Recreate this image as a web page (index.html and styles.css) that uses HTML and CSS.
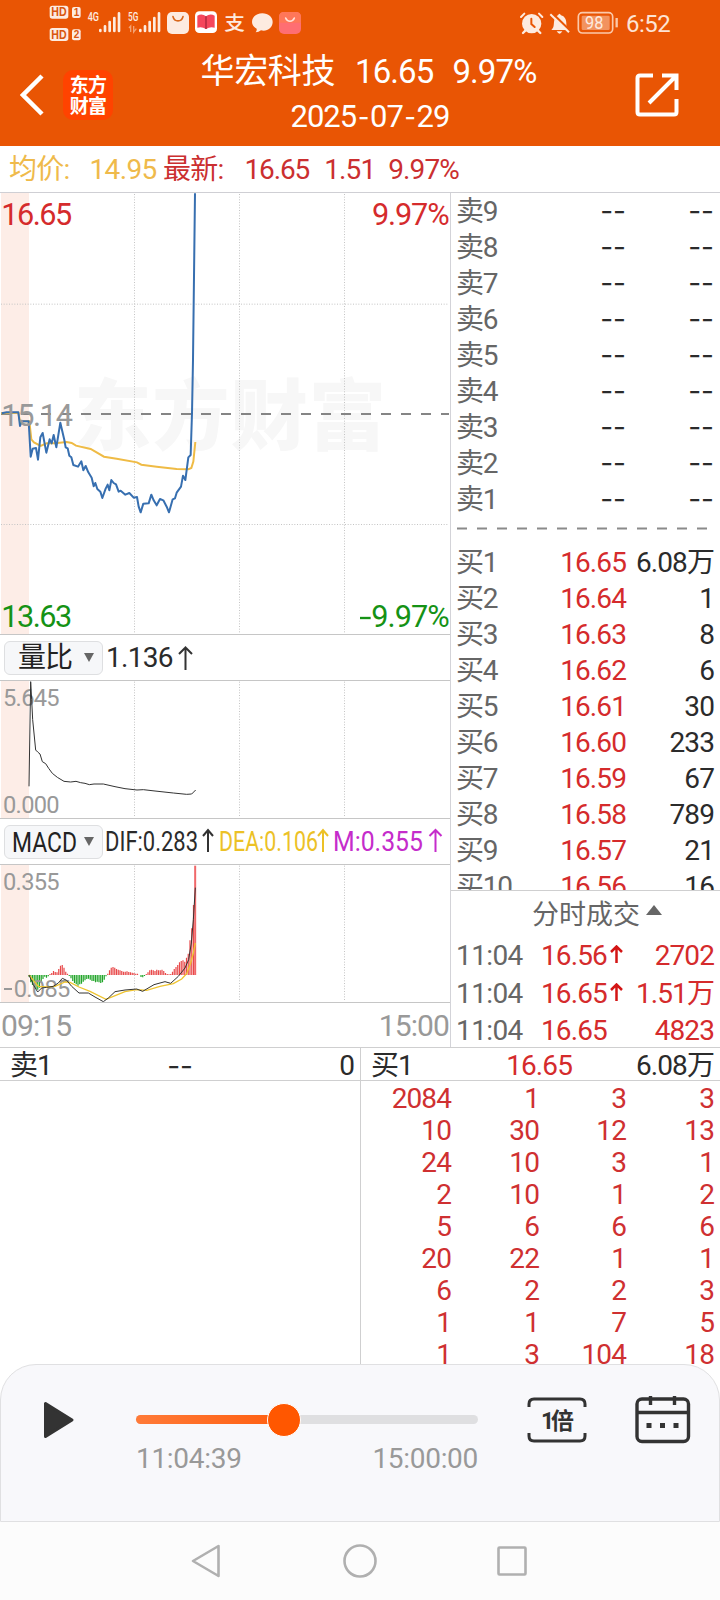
FILE: index.html
```html
<!DOCTYPE html>
<html lang="zh-CN">
<head>
    <meta charset="UTF-8">
    <title>华宏科技</title>
    <link rel="stylesheet" href="styles.css">
</head>
<body>
    <header>
        <div class="status">
            <svg class="status-left" viewBox="0 0 930 135" width="310" height="45">
                <g fill="#fdebe0">
                    <rect x="149" y="17" width="56" height="39" rx="8"/>
                    <rect x="216" y="21" width="26" height="33" rx="6"/>
                    <rect x="149" y="84" width="56" height="39" rx="8"/>
                    <rect x="216" y="88" width="26" height="33" rx="6"/>
                </g>
                <g class="sim">
                    <text x="154" y="49" textLength="46" lengthAdjust="spacingAndGlyphs">HD</text>
                    <text x="221" y="48">1</text>
                    <text x="154" y="116" textLength="46" lengthAdjust="spacingAndGlyphs">HD</text>
                    <text x="221" y="115">2</text>
                </g>
                <g class="net">
                    <text x="263" y="63" textLength="34" lengthAdjust="spacingAndGlyphs">4G</text>
                    <text x="384" y="63" textLength="31" lengthAdjust="spacingAndGlyphs">5G</text>
                </g>
                <g stroke="#fdebe0" stroke-width="8" stroke-linecap="round">
                    <path d="M301 90v3M315 79v14M329 66v27M343 54v39M357 40v53"/>
                    <path d="M421 90v3M435 79v14M449 66v27M463 54v39M477 40v53"/>
                </g>
                <path d="M387 84l5-6v18M401 78v18l8-10" fill="none" stroke="#f3a273" stroke-width="4"/>
                <rect x="501" y="36" width="66" height="66" rx="15" fill="#fdebe0"/>
                <path d="M519 50c4 17 26 17 30 0" fill="none" stroke="#d9671c" stroke-width="5" stroke-linecap="round"/>
                <rect x="585" y="34" width="66" height="65" rx="13" fill="#fff"/>
                <path d="M592 47q14-8 26 2q12-10 26-2v36q-14-4-26 4q-12-8-26-4z" fill="#f5465c"/>
                <path d="M618 49v38" stroke="#b92c42" stroke-width="5"/>
                <text class="pay" x="673" y="90" textLength="62" lengthAdjust="spacingAndGlyphs">支</text>
                <path d="M787 40c18 0 31 11 31 26s-13 26-27 26c-3 0-6 0-8-1q-7 6-16 6q4-5 3-11c-9-5-14-12-14-20c0-15 13-26 31-26z" fill="#fdebe0"/>
                <rect x="837" y="36" width="66" height="66" rx="15" fill="#ff6e72"/>
                <path d="M837 51q0-15 15-15h36q15 0 15 15v17h-66z" fill="#ff7759"/>
                <path d="M857 54c5 13 21 13 26 0" fill="none" stroke="#ffe3d8" stroke-width="5" stroke-linecap="round"/>
            </svg>
            <svg class="status-right" viewBox="465 0 495 135" width="165" height="45">
                <circle cx="515" cy="71" r="29" fill="#fdebe0"/>
                <path d="M483 51l10-10M547 51l-10-10" stroke="#fdebe0" stroke-width="6" stroke-linecap="round"/>
                <path d="M496 92l-7 7M534 92l7 7" stroke="#fdebe0" stroke-width="7" stroke-linecap="round"/>
                <path d="M514 56v16l10 9" fill="none" stroke="#e95504" stroke-width="6" stroke-linecap="round"/>
                <path d="M574 90c8-8 7-14 8-24c1-12 6-18 12-20q4-9 9 0c11 3 16 12 16 24c0 9 1 13 6 20zM590 94h17q-8 14-17 0z" fill="#fdebe0"/>
                <path d="M576 39l54 53" stroke="#e95504" stroke-width="7"/>
                <path d="M571 43l56 54" stroke="#fdebe0" stroke-width="6"/>
                <rect x="655" y="38" width="103" height="61" rx="12" fill="none" stroke="#fbc9aa" stroke-width="5"/>
                <rect x="665" y="47" width="84" height="43" rx="4" fill="#f2935f"/>
                <path d="M770 54v28" stroke="#fbc9aa" stroke-width="7"/>
                <text class="battery" x="675" y="86" textLength="55" lengthAdjust="spacingAndGlyphs">98</text>
                <text class="clock" x="798" y="96" textLength="134">6:52</text>
            </svg>
        </div>
        <div class="title-bar">
            <svg class="back" viewBox="0 0 24 42" width="24" height="42"><path d="M22 2L3 21l19 19" fill="none" stroke="#fff" stroke-width="4.500"/></svg>
            <div class="logo">东方<br>财富</div>
            <div class="title">
                <h1><span class="title-name">华宏科技</span><span class="title-price">16.65</span><span class="title-rate">9.97%</span></h1>
                <p>2025<b>-</b>07<b>-</b>29</p>
            </div>
            <svg class="share" viewBox="0 0 44 44" width="44" height="44"><path d="M18 2.500H5Q2.500 2.500 2.500 5V39Q2.500 41.500 5 41.500H39Q41.500 41.500 41.500 39V26M27 2.500H41.500V17M41 3L14 30" fill="none" stroke="#fff" stroke-width="4"/></svg>
        </div>
    </header>

    <div class="quote">
        <span class="avg"><i>均价:</i><span class="avg-num">14.95</span></span>
        <span class="latest"><i>最新:</i><span class="last-num">16.65</span><span class="chg-num">1.51</span><span class="rate-num">9.97%</span></span>
    </div>

    <main>
        <section class="charts">
            <svg class="chart" viewBox="0 -501 1350 1323" width="450" height="441">
                <rect class="auction" x="3" y="-501" width="84" height="1323"/>
                <text class="watermark" x="222" y="251" textLength="936">东方财富</text>
                <path class="grid" d="M403.500 -498V820M718.500 -498V820M1033.500 -498V820M3 -167.500H1345M3 493.500H1345"/>
                <path d="M3 162H1347" stroke="#858585" stroke-width="6" stroke-dasharray="30 30"/>
                <polyline points="3,160 55,158 60,184 88,184 94,238 102,247 122,258 140,250 165,250 200,246 215,249 228,257 272,267 312,290 350,296 411,307 424,314 470,320 530,327 565,328 574,324 580,305 586,246" fill="none" stroke="#efbb45" stroke-width="6"/>
                <polyline points="5,160 20,157 55,157 60,198 65,184 86,184 92,290 98,266 108,264 114,299 121,232 128,219 139,278 149,238 155,250 161,225 169,262 181,188 193,240 197,262 203,265 208,287 214,292 220,315 234,320 244,304 250,331 257,318 265,337 275,353 281,379 286,369 292,387 301,395 307,414 317,386 323,374 328,391 334,360 341,369 348,373 356,395 362,392 376,404 388,399 401,413 411,411 416,440 422,457 430,431 446,430 454,404 461,421 470,436 480,417 490,421 500,440 507,457 518,418 525,415 530,398 543,380 549,347 556,360 565,292 572,285 576,160 579,0 585,-500" fill="none" stroke="#376fb0" stroke-width="6" stroke-linejoin="round"/>
                <g class="axis-big">
                    <text class="up" x="4" y="-405" textLength="213">16.65</text>
                    <text class="up" x="1116" y="-405" textLength="233">9.97%</text>
                    <text class="flat" x="4" y="198" textLength="215">15.14</text>
                    <text class="down" x="4" y="801" textLength="213">13.63</text>
                    <text class="down" x="1114" y="801" textLength="235">9.97%</text>
                    <path d="M1080 774h32" stroke="#159215" stroke-width="7"/>
                </g>
            </svg>
            <div class="indicator">
                <div class="picker"><span>量比</span><i></i></div>
                <span class="value">1.136</span>
                <svg class="rise" viewBox="0 0 15 24" width="15" height="24"><path d="M7.500 24V1M1 8l6.500-6.500L14 8"/></svg>
            </div>
            <svg class="chart" viewBox="0 184 1350 411" width="450" height="137">
                <rect class="auction" x="3" y="184" width="84" height="411"/>
                <path class="grid" d="M403.500 186V594M718.500 186V594M1033.500 186V594"/>
                <g class="axis-small">
                    <text x="9" y="259" textLength="170">5.645</text>
                    <text x="9" y="579" textLength="170">0.000</text>
                </g>
                <polyline points="87,500 92,186 95,240 98,300 107,391 113,397 120,403 127,426 137,432 146,446 157,461 172,473 192,485 212,487 228,485 242,489 255,491 268,495 282,493 310,493 345,501 375,507 411,511 430,510 465,514 520,520 560,524 575,523 587,511" fill="none" stroke="#333" stroke-width="3"/>
            </svg>
            <div class="indicator">
                <div class="picker macd">
                    <svg viewBox="0 0 64 32" width="64" height="32"><text x="-1" y="26" textLength="65" lengthAdjust="spacingAndGlyphs">MACD</text></svg>
                    <i></i>
                </div>
                <!-- condensed so that all three values fit on the row -->
                <svg class="macd-values" viewBox="104 0 342 45" width="342" height="45">
                    <g fill="#2b2b2b" stroke="#333">
                        <text x="105" y="32" textLength="93" lengthAdjust="spacingAndGlyphs">DIF:0.283</text>
                        <path d="M208 33V11M203 17l5-6l5 6"/>
                    </g>
                    <g fill="#ecc126" stroke="#ecc126">
                        <text x="219" y="32" textLength="99" lengthAdjust="spacingAndGlyphs">DEA:0.106</text>
                        <path d="M323 33V11M318 17l5-6l5 6"/>
                    </g>
                    <g fill="#c52ccb" stroke="#c52ccb">
                        <text x="333" y="32" textLength="90" lengthAdjust="spacingAndGlyphs">M:0.355</text>
                        <path d="M435.500 33V11M429.500 17l6-6l6 6"/>
                    </g>
                </svg>
            </div>
            <svg class="chart" viewBox="0 136 1350 411" width="450" height="137">
                <rect class="auction" x="3" y="136" width="84" height="411"/>
                <path class="grid" d="M403.500 138V546M718.500 138V546M1033.500 138V546"/>
                <path id="barsUp" stroke="#e8494a" stroke-width="3.600"/>
                <path id="barsDown" stroke="#22a52a" stroke-width="3.600"/>
                <path d="M585.500 138V466" stroke="#f0686a" stroke-width="6"/>
                <g class="axis-small">
                    <text x="9" y="211" textLength="170">0.355</text>
                    <text x="41" y="531" textLength="170">0.085</text>
                    <path d="M12 508h24" stroke="#999" stroke-width="6"/>
                </g>
                <polyline points="87,466 115,500 140,502 165,500 195,487 210,488 237,502 270,515 318,539 340,530 375,516 410,510 440,512 480,500 520,492 545,478 560,462 572,430 580,400 586,370" fill="none" stroke="#efc42f" stroke-width="4"/>
                <polyline points="87,466 100,495 113,517 125,505 140,503 160,500 175,490 187,476 200,482 215,500 237,520 265,520 285,532 310,546 325,535 345,516 375,511 410,508 428,515 450,502 462,495 480,490 495,486 512,491 535,470 555,445 566,420 574,370 580,300 586,204" fill="none" stroke="#333" stroke-width="3"/>
            </svg>
            <div class="time-axis"><span>09:15</span><span>15:00</span></div>
        </section>

        <section class="book">
            <div class="levels">
                <div class="level"><span>卖9</span><b>--</b><b>--</b></div>
                <div class="level"><span>卖8</span><b>--</b><b>--</b></div>
                <div class="level"><span>卖7</span><b>--</b><b>--</b></div>
                <div class="level"><span>卖6</span><b>--</b><b>--</b></div>
                <div class="level"><span>卖5</span><b>--</b><b>--</b></div>
                <div class="level"><span>卖4</span><b>--</b><b>--</b></div>
                <div class="level"><span>卖3</span><b>--</b><b>--</b></div>
                <div class="level"><span>卖2</span><b>--</b><b>--</b></div>
                <div class="level"><span>卖1</span><b>--</b><b>--</b></div>
                <svg class="split" viewBox="0 0 252 27" width="252" height="27"><path d="M0 11.500H252" stroke="#8a8a8a" stroke-width="2" stroke-dasharray="10 10"/></svg>
                <div class="level"><span>买1</span><em>16.65</em><strong>6.08万</strong></div>
                <div class="level"><span>买2</span><em>16.64</em><strong>1</strong></div>
                <div class="level"><span>买3</span><em>16.63</em><strong>8</strong></div>
                <div class="level"><span>买4</span><em>16.62</em><strong>6</strong></div>
                <div class="level"><span>买5</span><em>16.61</em><strong>30</strong></div>
                <div class="level"><span>买6</span><em>16.60</em><strong>233</strong></div>
                <div class="level"><span>买7</span><em>16.59</em><strong>67</strong></div>
                <div class="level"><span>买8</span><em>16.58</em><strong>789</strong></div>
                <div class="level"><span>买9</span><em>16.57</em><strong>21</strong></div>
                <div class="level"><span>买10</span><em>16.56</em><strong>16</strong></div>
            </div>
            <div class="trades">
                <h2>分时成交<i></i></h2>
                <div class="trade"><span>11:04</span><em>16.56<svg viewBox="0 0 13 18" width="13" height="18"><path d="M6.500 18V2M1 7l5.500-5.500L12 7"/></svg></em><strong>2702</strong></div>
                <div class="trade"><span>11:04</span><em>16.65<svg viewBox="0 0 13 18" width="13" height="18"><path d="M6.500 18V2M1 7l5.500-5.500L12 7"/></svg></em><strong>1.51万</strong></div>
                <div class="trade"><span>11:04</span><em>16.65</em><strong>4823</strong></div>
            </div>
        </section>
    </main>

    <div class="queues">
        <section class="queue">
            <div class="queue-head"><span>卖1</span><b>--</b><strong>0</strong></div>
        </section>
        <section class="queue buy">
            <div class="queue-head"><span>买1</span><em>16.65</em><strong>6.08万</strong></div>
            <div class="orders">
                <span>2084</span><span>1</span><span>3</span><span>3</span>
                <span>10</span><span>30</span><span>12</span><span>13</span>
                <span>24</span><span>10</span><span>3</span><span>1</span>
                <span>2</span><span>10</span><span>1</span><span>2</span>
                <span>5</span><span>6</span><span>6</span><span>6</span>
                <span>20</span><span>22</span><span>1</span><span>1</span>
                <span>6</span><span>2</span><span>2</span><span>3</span>
                <span>1</span><span>1</span><span>7</span><span>5</span>
                <span>1</span><span>3</span><span>104</span><span>18</span>
            </div>
        </section>
    </div>

    <div class="player">
        <svg class="play" viewBox="0 0 31 38" width="31" height="38"><path d="M2.500 2.500V35.500L29 19z" fill="#333" stroke="#333" stroke-width="3" stroke-linejoin="round"/></svg>
        <div class="progress">
            <div class="track"><div class="fill"></div><div class="thumb"></div></div>
            <div class="times"><span>11:04:39</span><span>15:00:00</span></div>
        </div>
        <svg class="speed" viewBox="0 0 60 48" width="60" height="48">
            <path d="M2 11V8Q2 3 7 3H53Q58 3 58 8V11M2 37V40Q2 45 7 45H53Q58 45 58 40V37" fill="none" stroke="#333" stroke-width="3"/>
            <text x="14" y="33" textLength="33">1倍</text>
        </svg>
        <svg class="calendar" viewBox="0 0 56 50" width="56" height="50">
            <rect x="2" y="5" width="51.500" height="42.500" rx="5" fill="none" stroke="#333" stroke-width="3.400"/>
            <path d="M2 18.500H53M15.500 2V11M39.500 2V11" stroke="#333" stroke-width="3.400"/>
            <path d="M11.500 31.500h5M25 31.500h5M38.500 31.500h5" stroke="#333" stroke-width="5"/>
        </svg>
    </div>

    <nav>
        <svg viewBox="0 0 30 34" width="30" height="34"><path d="M27.500 2V32L2 17z" fill="none" stroke="#b0b0b0" stroke-width="2.600" stroke-linejoin="round"/></svg>
        <svg viewBox="0 0 34 34" width="34" height="34"><circle cx="17" cy="17" r="15.500" fill="none" stroke="#b0b0b0" stroke-width="2.600"/></svg>
        <svg viewBox="0 0 30 30" width="30" height="30"><rect x="1.500" y="1.500" width="27" height="27" rx="1" fill="none" stroke="#b0b0b0" stroke-width="2.600"/></svg>
    </nav>

    <script>
        // MACD histogram, one bar per minute from 09:30
        const bars = [-5, -22, -30, -36, -42, -44, -38, -24, -12, -5, -8, -4, 3, 6, 12, 9, 8, 18, 28, 30, 22, 10, 4,
            -3, -10, -18, -24, -28, -32, -28, -26, -20, -16, -12, -11, -14, -18, -18, -22, -20, -22, -24, -22, -14, -4,
            4, 14, 22, 24, 22, 18, 16, 14, 12, 10, 10, 11, 9, 8, 7, 6, 4, 4, 0, -6, -7, -3, 3, 8, 14, 16, 14, 12, 16,
            14, 14, 16, 12, 6, 3, 2, 3, 10, 18, 24, 30, 38, 42, 44, 40, 52, 64, 104, 140, 210];
        let up = "";
        let down = "";

        bars.forEach((value, i) => {
            const line = `M${87 + i * 5.25} 466v${-value}`;
            if (value > 0) {
                up += line;
            } else {
                down += line;
            }
        });
        document.getElementById("barsUp").setAttribute("d", up);
        document.getElementById("barsDown").setAttribute("d", down);
    </script>
</body>
</html>
```
FILE: styles.css
```css
* {
    box-sizing: border-box;
}

body {
    width: 720px;
    height: 1600px;
    margin: 0;
    overflow: hidden;
    background-color: #fff;
    font-family: Roboto, "Noto Sans CJK SC", sans-serif;
    font-size: 28px;
    letter-spacing: -0.9px;
    color: #2b2b2b;
}

svg {
    display: block;
    flex: none;
}

i, em {
    font-style: normal;
}

b, strong {
    font-weight: 400;
}

header {
    height: 146px;
    background-color: #e95504;
    color: #fff;
}

.status {
    display: flex;
    height: 45px;
}

.status-right {
    margin-left: 205px;
}

.status text {
    letter-spacing: 0;
}

.sim text {
    font-size: 36px;
    font-weight: 700;
    fill: #d9560f;
    font-family: "Liberation Sans", sans-serif;
}

.sim text:nth-child(even) {
    font-size: 30px;
}

.net text {
    font-size: 36px;
    font-weight: 500;
    fill: #fdebe0;
}

.pay {
    font-size: 58px;
    font-weight: 500;
    fill: #fdebe0;
}

.battery {
    font-size: 54px;
    fill: #fdebe0;
}

.clock {
    font-size: 72px;
    fill: #fde3d4;
}

.title-bar {
    display: flex;
    height: 101px;
    padding-left: 20px;
}

.back {
    margin-top: 29px;
}

.logo {
    width: 50px;
    height: 50px;
    margin: 25px 0 0 19px;
    padding-top: 3px;
    border-radius: 10px;
    background-color: #ff4300;
    font: 700 19px/21px "Noto Sans CJK SC", sans-serif;
    letter-spacing: -0.8px;
    text-align: center;
}

.title {
    width: 514px;
    text-align: center;
}

.title h1 {
    margin: 2px 0 0;
    font-size: 33px;
    font-weight: 400;
    line-height: 48px;
    letter-spacing: -0.9px;
    padding-right: 3px;
}

.title-name {
    font-size: 34px;
    letter-spacing: -0.4px;
}

.title-price {
    margin-left: 20px;
}

.title-rate {
    margin-left: 19px;
}

.title p {
    margin: -3px 0 0;
    font-size: 31px;
    line-height: 42px;
    letter-spacing: -1px;
}

.title p b {
    margin: 0 2px;
    font-family: "Noto Sans CJK SC", sans-serif;
}

.share {
    margin: 28px 0 0 8px;
}

.quote {
    display: flex;
    height: 47px;
    padding-left: 9px;
    border-bottom: 1px solid #cfcfd4;
    line-height: 48px;
    white-space: nowrap;
}

.quote i {
    display: inline-block;
    letter-spacing: -0.8px;
}

.avg {
    width: 154px;
    color: #efba4b;
}

.avg-num {
    margin-left: 20px;
    letter-spacing: -0.6px;
}

.latest {
    color: #cb2f30;
}

.last-num {
    margin-left: 21px;
    letter-spacing: -1.1px;
}

.chg-num {
    margin-left: 15px;
}

.rate-num {
    margin-left: 13px;
}

main {
    display: flex;
    height: 855px;
    border-bottom: 1px solid #cfcfd0;
}

.charts {
    width: 451px;
    border-right: 1px solid #d3d3d8;
}

.auction {
    fill: #fdede7;
}

.grid {
    fill: none;
    stroke: #c4c4c4;
    stroke-width: 3;
    stroke-dasharray: 3 5;
}

.watermark {
    font: 900 232px "Noto Sans CJK SC", sans-serif;
    letter-spacing: 0;
    fill: #f7f7f7;
}

.axis-big text {
    font-size: 92px;
    letter-spacing: 0;
}

.axis-small text {
    font-size: 71px;
    letter-spacing: 0;
    fill: #999;
}

.up {
    fill: #d52b2c;
}

.flat {
    fill: #999;
}

.down {
    fill: #159215;
}

.indicator {
    display: flex;
    align-items: center;
    height: 47px;
    padding-left: 4px;
    border-top: 1px solid #c6c6c6;
    border-bottom: 1px solid #c6c6c6;
}

.picker {
    display: flex;
    align-items: center;
    justify-content: space-between;
    width: 99px;
    height: 34px;
    padding: 0 8px 0 13px;
    border: 1px solid #dedfe1;
    border-radius: 6px;
    background-color: #f6f7f9;
    line-height: 32px;
    color: #222;
}

.picker i {
    border: 5px solid transparent;
    border-top: 9px solid #666;
    border-bottom: 0;
}

.value {
    margin-left: 3px;
    letter-spacing: -0.7px;
}

.rise {
    margin-left: 5px;
    fill: none;
    stroke: #333;
    stroke-width: 2;
}

.macd {
    padding-left: 8px;
}

.macd text {
    font-size: 28px;
    letter-spacing: 0;
    fill: #222;
}

.macd-values {
    margin-left: 1px;
}

.macd-values text {
    font-size: 28px;
    letter-spacing: 0;
    stroke: none;
}

.macd-values path {
    fill: none;
    stroke-width: 2;
}

.time-axis {
    display: flex;
    justify-content: space-between;
    height: 45px;
    border-top: 1px solid #c6c6c6;
    line-height: 46px;
    font-size: 30px;
    color: #999;
    padding: 0 1px 0 1px;
}

.book {
    width: 269px;
}

.levels {
    height: 697px;
    overflow: hidden;
}

.level {
    display: grid;
    grid-template-columns: 68px 102px 88px;
    height: 36px;
    padding-left: 5px;
    line-height: 38px;
}

.level span {
    color: #666;
    letter-spacing: -1.2px;
}

.level b, .level em, .level strong {
    text-align: right;
}

.level b, .queue-head b {
    height: 36px;
    font-family: Inter, sans-serif;
    font-size: 28px;
    line-height: 36px;
    letter-spacing: 0;
}

.level em, .trade em, .trade strong {
    color: #d52b2c;
}

.split {
    margin-left: 6px;
}

.trades {
    height: 157px;
    border-top: 1px solid #cfcfd0;
}

.trades h2 {
    display: flex;
    align-items: center;
    height: 46px;
    margin: 0;
    padding: 0 0 4px 81px;
    font-size: 27px;
    font-weight: 400;
    letter-spacing: 0;
    color: #666;
}

.trades h2 i {
    margin: -4px 0 0 6px;
    border: 8px solid transparent;
    border-top: 0;
    border-bottom: 10px solid #666;
}

.trade {
    display: grid;
    grid-template-columns: 85px 85px 88px;
    height: 37.500px;
    padding-left: 5px;
    line-height: 37px;
}

.trade span {
    color: #666;
    letter-spacing: -0.6px;
}

.trade em {
    display: flex;
}

.trade svg {
    margin: 8px 0 0 3px;
    fill: none;
    stroke: #d31515;
    stroke-width: 2.500;
}

.trade strong {
    text-align: right;
}

.queues {
    display: flex;
    height: 316px;
    overflow: hidden;
}

.queue {
    width: 360px;
}

.buy {
    border-left: 1px solid #cfcfd0;
}

.queue-head {
    display: grid;
    grid-template-columns: 90px 1fr 130px;
    height: 33px;
    padding: 0 6px 0 10px;
    border-bottom: 1px solid #cfcfd0;
    line-height: 36px;
}

.queue-head b, .queue-head em {
    text-align: right;
}

.queue-head b {
    padding-right: 31px;
}

.queue-head em {
    padding-right: 12px;
    color: #d52b2c;
}

.queue-head strong {
    text-align: right;
}

.orders {
    display: grid;
    grid-template-columns: 90px 88px 87px 88px;
    grid-auto-rows: 32px;
    line-height: 35px;
    text-align: right;
    color: #cf3031;
}

.player {
    display: flex;
    height: 158px;
    padding-left: 42px;
    border: 1px solid #e0e0e2;
    border-radius: 36px 36px 0 0;
    background-color: #f8f8fb;
}

.play {
    margin-top: 36px;
}

.progress {
    width: 342px;
    margin: 50px 0 0 62px;
}

.track {
    position: relative;
    height: 9px;
    border-radius: 5px;
    background-color: #dfdfe1;
}

.fill {
    width: 148px;
    height: 9px;
    border-radius: 5px 0 0 5px;
    background: linear-gradient(to right, #ff7a38, #ff5f10);
}

.thumb {
    position: absolute;
    left: 131px;
    top: -12px;
    width: 34px;
    height: 34px;
    border: 1px solid #fff;
    border-radius: 50%;
    background-color: #ff5700;
}

.times {
    display: flex;
    justify-content: space-between;
    margin-top: 17px;
    font-size: 28px;
    line-height: 36px;
    letter-spacing: -0.3px;
    color: #999;
}

.speed {
    margin: 31px 0 0 49px;
}

.speed text {
    font-size: 23px;
    font-weight: 700;
    letter-spacing: 0;
    fill: #333;
}

.calendar {
    margin: 29px 0 0 48px;
}

nav {
    display: flex;
    align-items: center;
    height: 78px;
    padding-left: 191px;
    background-color: #fcfcfc;
}

nav svg:nth-child(2) {
    margin-left: 122px;
}

nav svg:nth-child(3) {
    margin-left: 120px;
}
```
